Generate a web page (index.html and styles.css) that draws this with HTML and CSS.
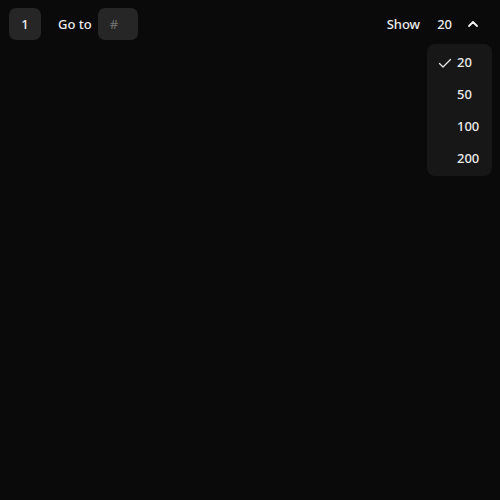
FILE: index.html
```html
<!DOCTYPE html>
<html>
<head>
<meta charset="utf-8">
<link rel="stylesheet" href="styles.css">
</head>
<body>
<div class="bar">
  <div class="left">
    <button class="page">1</button>
    <span class="label">Go to</span>
    <input class="goto" placeholder="#">
  </div>
  <div class="right">
    <span class="label">Show</span>
    <span class="value">20</span>
    <svg class="chev" width="12" height="12" viewBox="0 0 12 12"><path d="M2 8 L6 4 L10 8" fill="none" stroke="#f2f2f2" stroke-width="1.8" stroke-linecap="round" stroke-linejoin="round"/></svg>
    <div class="menu">
      <div class="item"><svg class="check" width="14" height="14" viewBox="0 0 14 14"><path d="M1.5 7.5 L5 11 L12.5 3.5" fill="none" stroke="#e6e6e6" stroke-width="1.3" stroke-linecap="round" stroke-linejoin="round"/></svg><span>20</span></div>
      <div class="item"><span>50</span></div>
      <div class="item"><span>100</span></div>
      <div class="item"><span>200</span></div>
    </div>
  </div>
</div>
</body>
</html>
```
FILE: styles.css
```css
html, body {
  margin: 0;
  height: 100%;
  background: #0a0a0a;
}
body {
  font-family: "Noto Sans", "Open Sans", sans-serif;
  font-size: 13px;
  font-weight: 500;
  color: #ececec;
}
.bar {
  display: flex;
  justify-content: space-between;
  align-items: center;
  padding: 8px 8px 0 9px;
}
.left {
  display: flex;
  align-items: center;
}
.page {
  width: 32px;
  height: 32px;
  border: none;
  border-radius: 7px;
  background: #262626;
  color: #f0f0f0;
  font: inherit;
  padding: 0;
}
.label {
  margin-left: 17px;
  margin-right: 6px;
}
.goto {
  width: 40px;
  height: 32px;
  box-sizing: border-box;
  border: none;
  border-radius: 7px;
  background: #262626;
  color: #eee;
  font: inherit;
  padding: 0 0 0 12px;
  outline: none;
}
.goto::placeholder { color: #6b6b6b; }
.right {
  position: relative;
  display: flex;
  align-items: center;
  height: 32px;
}
.right .label { margin: 0 17px 0 0; }
.chev { margin-left: 15px; margin-right: 13px; }
.menu {
  position: absolute;
  top: 36px;
  right: 0;
  width: 65px;
  box-sizing: border-box;
  background: #171717;
  border-radius: 8px;
  padding: 2px 0;
}
.item {
  height: 32px;
  display: flex;
  align-items: center;
  padding-left: 30px;
  position: relative;
}
.check {
  position: absolute;
  left: 11px;
  top: 10px;
}
```
